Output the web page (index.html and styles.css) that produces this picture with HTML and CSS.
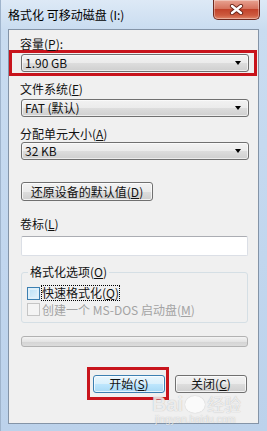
FILE: index.html
```html
<!DOCTYPE html>
<html lang="zh-CN">
<head>
    <meta charset="UTF-8">
    <meta name="viewport" content="width=device-width, initial-scale=1.0">
    <title>格式化 可移动磁盘 (I:)</title>
    <link rel="stylesheet" href="styles.css">
</head>
<body>
    <div class="window">
        <div class="titlebar">
            <span class="title">格式化 可移动磁盘 (I:)</span>
            <div class="close">
                <svg width="17" height="11" viewBox="0 0 17 11">
                    <path d="M4 2 L13 9 M13 2 L4 9" stroke="#6a2418" stroke-width="4.2" stroke-linecap="round"/>
                    <path d="M4 2 L13 9 M13 2 L4 9" stroke="#fff" stroke-width="2.4" stroke-linecap="round"/>
                </svg>
            </div>
        </div>

        <div class="panel">
            <div class="label">容量(<u>P</u>):</div>
            <div class="mark mark-combo">
                <div class="combo"><span class="val">1.90 GB</span><i class="arrow"></i></div>
            </div>

            <div class="label label-2">文件系统(<u>F</u>)</div>
            <div class="combo combo-2"><span class="val">FAT (默认)</span><i class="arrow"></i></div>

            <div class="label label-3">分配单元大小(<u>A</u>)</div>
            <div class="combo combo-3"><span class="val">32 KB</span><i class="arrow"></i></div>

            <div class="btn btn-reset">还原设备的默认值(<u>D</u>)</div>

            <div class="label label-4">卷标(<u>L</u>)</div>
            <div class="input"></div>

            <fieldset class="group">
                <legend>格式化选项(<u>O</u>)</legend>
                <div class="row">
                    <span class="cb cb-hover"></span>
                    <span class="focus">快速格式化(<u>Q</u>)</span>
                </div>
                <div class="row row-off">
                    <span class="cb cb-off"></span>
                    <span>创建一个 MS-DOS 启动盘(<u>M</u>)</span>
                </div>
            </fieldset>

            <div class="progress"></div>

            <div class="actions">
                <div class="mark mark-btn">
                    <div class="btn btn-default">开始(<u>S</u>)</div>
                </div>
                <div class="btn btn-close">关闭(<u>C</u>)</div>
            </div>
        </div>

        <!-- 水印 -->
        <div class="watermark">
            <div class="wm-logo">Bai<span class="paw"></span><span class="wm-cn">经验</span></div>
            <div class="wm-url">jingyan.baidu.com</div>
        </div>
    </div>
</body>
</html>
```

FILE: styles.css
```css
*{
    margin: 0;
    padding: 0;
    box-sizing: border-box;
}
u{
    text-decoration: underline;
    text-underline-offset: 1px;
}

body{
    font-family: "Noto Sans CJK SC", "Liberation Sans", sans-serif;
    font-size: 12px;
    color: #111;
    background: #c3d7ee;
}

.window{
    position: relative;
    width: 267px;
    height: 431px;
    padding: 0 8px 7px 7px;
    background: linear-gradient(#dde9f6, #c9dcf0 30px, #c1d6ee 60%, #bcd2eb);
    border-left: 1px solid #9fb4cc;
    overflow: hidden;
}

/* 标题栏 */
.titlebar{
    height: 29px;
    display: flex;
    justify-content: space-between;
    align-items: flex-start;
}
.title{
    margin-top: 8px;
    line-height: 14px;
    color: #000;
}
.close{
    width: 47px;
    height: 20px;
    margin-right: -1px;
    display: flex;
    align-items: center;
    justify-content: center;
    border: 1px solid #6f2a20;
    border-top: none;
    border-radius: 0 0 5px 5px;
    background: linear-gradient(#e8a392, #d6735e 45%, #c2432b 50%, #cd5a3f 80%, #e0866a);
    box-shadow: inset 0 0 0 1px rgba(255,255,255,.35);
}

/* 内容面板 */
.panel{
    height: 395px;
    padding: 8px 9px 0 12px;
    background: #f0f0f0;
    border: 1px solid #8494a7;
}

.label{
    height: 12px;
    line-height: 12px;
    margin-left: -1px;
    white-space: nowrap;
}
.label-2{ margin-top: 7px; }
.label-3{ margin-top: 11px; }
.label-4{ margin-top: 17px; }

/* 红色标注框 */
.mark{
    border: 3px solid #c8141c;
}
.mark-combo{
    margin: 0 -8px 0 -12px;
    padding: 1px 5px 1px 9px;
}
.mark-btn{
    padding: 5px 1px 4px 3px;
}

/* 下拉框 */
.combo{
    position: relative;
    height: 18px;
    display: flex;
    align-items: center;
    padding-left: 3px;
    border: 1px solid #707070;
    border-radius: 3px;
    background: linear-gradient(#f2f2f2, #ebebeb 50%, #dddddd 51%, #cfcfcf);
    box-shadow: inset 0 0 0 1px rgba(255,255,255,.6);
    line-height: 12px;
}
.combo-2{ margin-top: 4px; }
.combo-3{ margin-top: 2px; }
.arrow{
    position: absolute;
    right: 7px;
    top: 6px;
    border-left: 3.5px solid transparent;
    border-right: 3.5px solid transparent;
    border-top: 4px solid #000;
}

/* 按钮 */
.btn{
    height: 19px;
    display: flex;
    align-items: center;
    justify-content: center;
    border: 1px solid #707070;
    border-radius: 3px;
    background: linear-gradient(#f2f2f2, #ebebeb 50%, #dddddd 51%, #cfcfcf);
    box-shadow: inset 0 0 0 1px rgba(255,255,255,.7);
    line-height: 12px;
    white-space: nowrap;
}
.btn-reset{
    width: 132px;
    margin-top: 22px;
}
.btn-default{
    width: 72px;
    height: 18px;
    border-color: #3c7fb1;
    background: linear-gradient(#eaf6fd, #d9f0fc 50%, #bee6fd 51%, #a7d9f5);
}
.btn-close{
    width: 72px;
    height: 18px;
    margin-left: 6px;
}

/* 输入框 */
.input{
    height: 20px;
    margin-top: 6px;
    margin-right: 1px;
    background: #fff;
    border: 1px solid #dbdfe6;
    border-top-color: #abadb3;
    border-radius: 2px;
}

/* 分组框 */
.group{
    margin-top: 10px;
    margin-right: 1px;
    padding: 8px 0 6px 5px;
    border: 1px solid #d5dfe5;
    border-radius: 3px;
}
.group legend{
    margin-left: 1px;
    padding: 0 2px;
    line-height: 12px;
}
.row{
    height: 14px;
    display: flex;
    align-items: center;
    gap: 2px;
    white-space: nowrap;
}
.row + .row{
    margin-top: 2px;
}
.row-off{
    color: #a3a3a3;
}
.cb{
    width: 13px;
    height: 13px;
    border: 1px solid #8e8f8f;
    background: #f4f4f4;
}
.cb-hover{
    border-color: #3c7fb1;
    background: linear-gradient(135deg, #b9dff6, #e4f3fb);
    box-shadow: inset 0 0 0 2px #dff0fa;
}
.cb-off{
    border-color: #c5c5c5;
    background: #f4f4f4;
}
.focus{
    outline: 1px dotted #000;
    outline-offset: 0;
    line-height: 14px;
}

/* 进度条 */
.progress{
    height: 11px;
    margin-top: 13px;
    margin-right: 1px;
    border: 1px solid #b2b2b2;
    border-radius: 3px;
    background: linear-gradient(#f4f4f4, #e4e4e4 50%, #d4d4d4 51%, #dcdcdc);
}

.actions{
    margin-top: 20px;
    margin-right: 2px;
    display: flex;
    justify-content: flex-end;
    align-items: center;
}

/* 水印 */
.watermark{
    position: absolute;
    left: 151px;
    top: 397px;
    color: rgba(255,255,255,.75);
    text-shadow: 0 0 1px rgba(120,120,120,.55);
    pointer-events: none;
}
.wm-logo{
    display: flex;
    align-items: center;
    height: 14px;
    font-family: "Liberation Sans", sans-serif;
    font-weight: 700;
    font-size: 20px;
    line-height: 14px;
}
.paw{
    width: 20px;
    height: 17px;
    margin: 0 2px;
    border-radius: 50%;
    background: rgba(255,255,255,.65);
    box-shadow: 0 0 1px rgba(120,120,120,.55);
}
.wm-cn{
    font-family: "Noto Sans CJK SC", sans-serif;
    font-size: 17px;
    font-weight: 400;
}
.wm-url{
    margin-top: 4px;
    margin-left: 3px;
    font-family: "Liberation Sans", sans-serif;
    font-size: 10px;
    line-height: 10px;
}
```
